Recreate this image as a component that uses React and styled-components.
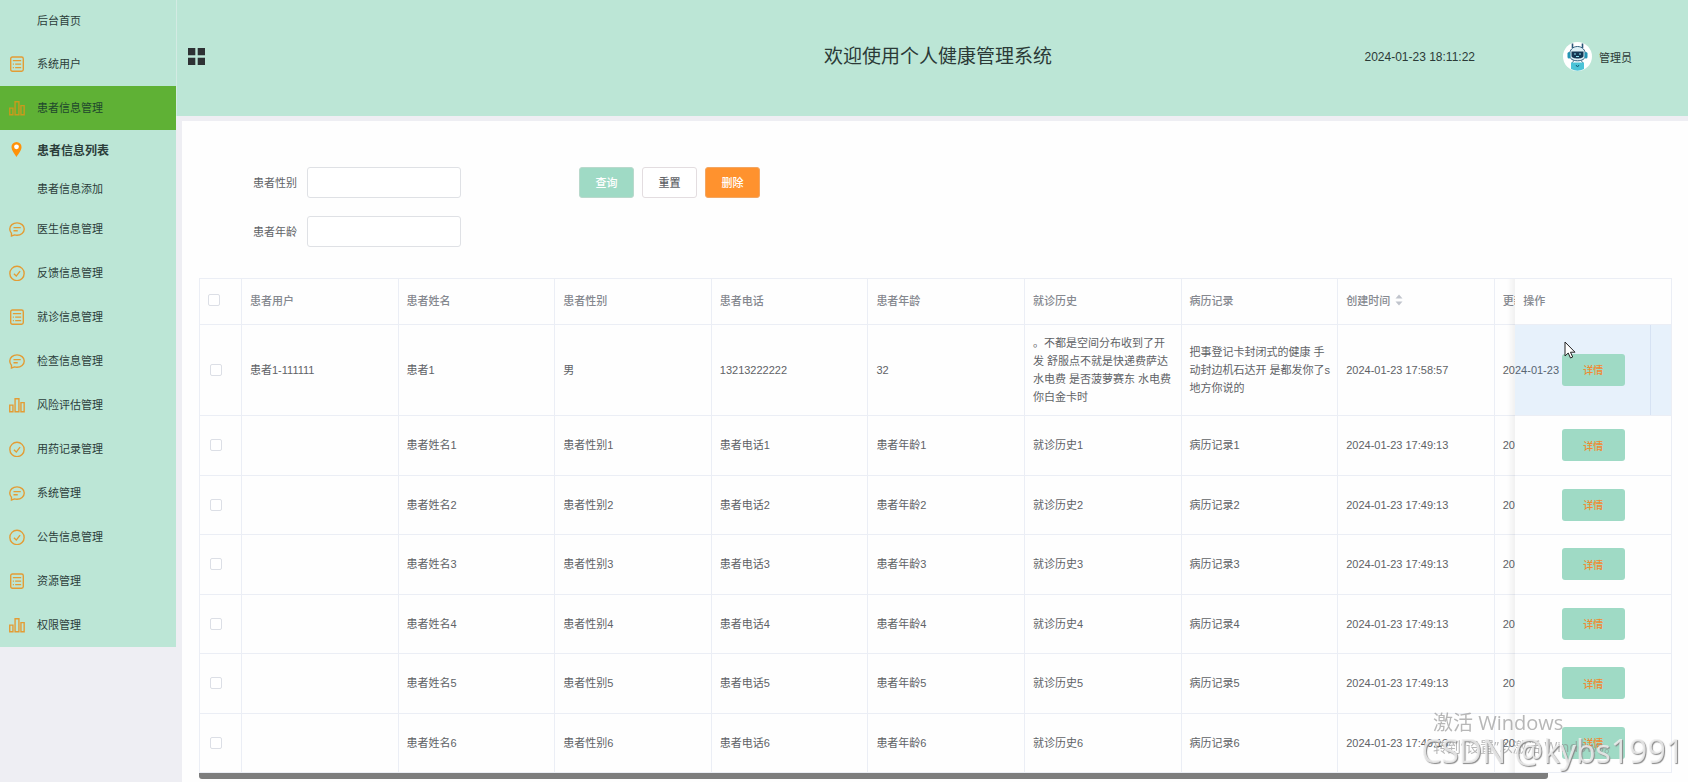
import React, { useState } from 'react';
import styled, { createGlobalStyle } from 'styled-components';

const GlobalStyle = createGlobalStyle`
  * {
    box-sizing: border-box;
  }

  body {
    margin: 0;
    background: #eeeef3;
    color: #606266;
    font-family: 'Liberation Sans', 'Noto Sans CJK SC', sans-serif;
    font-size: 11px;
  }

  button,
  input {
    font-family: inherit;
    font-size: inherit;
  }
`;

const Layout = styled.div`
  display: flex;
  min-height: 100vh;
`;

const Sidebar = styled.nav`
  flex: none;
  width: 176px;
`;

const Menu = styled.ul`
  margin: 0;
  padding: 0;
  list-style: none;
  background: #bce6d6;
`;

const MenuLink = styled.a`
  display: flex;
  align-items: center;
  gap: 12px;
  height: ${({ $height }) => $height || 44}px;
  padding: 0 9px 2px;
  color: ${({ $active }) => ($active ? '#20472d' : '#2b3d3a')};
  background: ${({ $active }) => ($active ? '#5fb135' : 'transparent')};
  font-size: ${({ $current }) => ($current ? 12 : 11)}px;
  font-weight: ${({ $current }) => ($current ? 'bold' : 'normal')};
  text-decoration: none;
`;

const IconSlot = styled.span`
  display: flex;
  width: 16px;
  height: 15px;
  color: ${({ $active }) => ($active ? '#c99a1c' : '#e39c34')};
`;

const Main = styled.div`
  flex: 1;
  min-width: 0;
  display: flex;
  flex-direction: column;
`;

const Header = styled.header`
  display: grid;
  grid-template-columns: 1fr auto 1fr;
  align-items: center;
  height: 116px;
  padding-left: 11px;
  padding-bottom: 3px;
  border-left: 1px solid #d3ebe3;
  background: #bce6d6;
  color: #2b3a37;
`;

const CollapseButton = styled.button`
  display: flex;
  width: 17px;
  padding: 0;
  border: none;
  background: none;
  color: #2e3234;
`;

const Title = styled.h1`
  margin: 0;
  font-size: 19px;
  font-weight: 400;
  line-height: 28px;
`;

const HeaderRight = styled.div`
  display: flex;
  align-items: center;
  justify-content: flex-end;
  gap: 88px;
  padding-right: 56px;
  font-size: 12px;
`;

const User = styled.div`
  display: flex;
  align-items: center;
  gap: 7px;
  font-size: 11px;
`;

const Panel = styled.main`
  flex: 1;
  min-width: 0;
  margin: 5px 0 0 6px;
  padding: 46px 16px 2px 17px;
  background: #fefefe;
`;

const SearchForm = styled.form`
  display: flex;
  align-items: flex-start;
  gap: 118px;
  margin: 0 0 31px 54px;
`;

const Fields = styled.div`
  display: flex;
  flex-direction: column;
  gap: 18px;
`;

const Field = styled.div`
  display: flex;
  align-items: center;
`;

const FieldLabel = styled.label`
  width: 54px;
  padding: 0 10px 2px 0;
  text-align: right;
  white-space: nowrap;
`;

const Input = styled.input`
  width: 154px;
  height: 31px;
  padding: 0 10px;
  border: 1px solid #dfe1e5;
  border-radius: 3px;
  background: #fff;
  outline: none;
`;

const ButtonGroup = styled.div`
  display: flex;
  gap: 8px;
`;

const Button = styled.button`
  width: 55px;
  height: 31px;
  padding: 0 0 2px;
  border: 1px solid ${({ $border }) => $border || '#e3dde0'};
  border-radius: 3px;
  background: ${({ $bg }) => $bg || '#fff'};
  color: ${({ $color }) => $color || '#606266'};
  font-weight: 500;
`;

const TableScroll = styled.div`
  overflow-x: auto;
  scrollbar-width: none;
  border: 1px solid #ebeef5;
  border-width: 1px 0 0 1px;
`;

const Table = styled.table`
  width: 100%;
  min-width: 1608px;
  table-layout: fixed;
  border-collapse: separate;
  border-spacing: 0;
`;

const HeadCell = styled.th`
  height: 46px;
  padding: 0 4px 3px 8px;
  border: 1px solid #ebeef5;
  border-width: 0 1px 1px 0;
  color: #85888f;
  font-weight: 500;
  text-align: left;
`;

const CheckHeadCell = styled(HeadCell)`
  width: 42px;
`;

const Cell = styled.td`
  padding: 0 4px 1px 8px;
  border: 1px solid #ebeef5;
  border-width: 0 1px 1px 0;
  line-height: 18px;
  white-space: pre-line;
`;

const CheckCell = styled(Cell)`
  padding-left: 10px;
`;

const Row = styled.tr`
  height: ${({ $tall }) => ($tall ? 91 : 60)}px;

  &:nth-child(odd) {
    height: ${({ $tall }) => ($tall ? 91 : 59)}px;
  }
`;

const edgeShadow = `
  &::before {
    content: '';
    position: absolute;
    top: 0;
    bottom: -1px;
    left: -8px;
    width: 8px;
    background: linear-gradient(to right, transparent, rgba(0, 0, 0, 0.05));
  }
`;

const FixedHeadCell = styled(HeadCell)`
  position: sticky;
  right: 0;
  background: #fefefe;
  ${edgeShadow}
`;

const FixedCell = styled(Cell)`
  position: sticky;
  right: 0;
  padding: 0 0 1px;
  text-align: center;
  background: ${({ $hover }) => ($hover ? 'rgba(33, 130, 225, 0.1)' : '#fefefe')};
  ${edgeShadow}
`;

const Checkbox = styled.input.attrs({ type: 'checkbox' })`
  appearance: none;
  display: block;
  width: 12px;
  height: 12px;
  margin: 0;
  border: 1px solid #dcdfe6;
  border-radius: 2px;
  background: ${({ checked }) => (checked ? '#9fdac5' : '#fff')};
`;

const SortLabel = styled.span`
  display: flex;
  align-items: center;
  gap: 5px;
`;

const DetailButton = styled.button`
  width: 63px;
  height: 32px;
  padding: 0;
  border: none;
  border-radius: 3px;
  background: #9fdac5;
  color: #ef8a32;
  font-size: 10px;
  font-weight: 500;
  vertical-align: middle;
`;

const Pointer = styled.svg`
  position: absolute;
  top: 16px;
  left: 49px;
`;

const Track = styled.div`
  height: 6px;
`;

const Thumb = styled.div`
  width: calc(100% - 124px);
  height: 6px;
  border-radius: 0 0 3px 3px;
  background: #7d7d7d;
`;

const Activation = styled.div`
  position: fixed;
  right: 75px;
  bottom: 24px;
  width: 180px;
  color: rgba(135, 135, 135, 0.6);
  font-family: 'Open Sans', 'Noto Sans CJK SC', sans-serif;
  font-size: 14px;
  line-height: 22px;
  white-space: nowrap;
  pointer-events: none;
`;

const ActivationTitle = styled.div`
  font-size: 20px;
  line-height: 26px;
`;

const Watermark = styled.div`
  position: fixed;
  right: 4px;
  bottom: 11px;
  color: rgba(238, 238, 238, 0.85);
  font-family: 'Open Sans', sans-serif;
  font-size: 32px;
  line-height: 40px;
  text-shadow: 1px 1px 1px #888;
  white-space: nowrap;
  pointer-events: none;
`;

const ICONS = {
  list: (
    <>
      <rect x="1.6" y="0.9" width="11.8" height="13.4" rx="1.6" />
      <path d="M3.6 4.3h7.8M3.6 7.6h1M5.8 7.6h5.6M3.6 10.9h1M5.8 10.9h5.6" />
    </>
  ),
  bars: (
    <path d="M0.7 7.6h3v6.2h-3zM5.7 1.7h3.6v12.1H5.7zM11.2 5.3h3v8.5h-3z" />
  ),
  chat: (
    <>
      <path d="M2.3 11.4C1.3 10.4 0.7 9.1 0.7 7.6C0.7 4.2 3.8 1.8 7.5 1.8s6.8 2.4 6.8 5.7-3.1 5.8-6.8 5.8c-.8 0-1.600-.1-2.300-.3l-2.900 1z" />
      <path d="M4.2 6.2h6.8M4.2 9.1h4" />
    </>
  ),
  check: (
    <>
      <circle cx="7.5" cy="7.9" r="6.7" />
      <path d="M4.6 8.3l2.200 2.100 3.600-4.600" />
    </>
  ),
};

const MenuIcon = ({ name }) => {
  if (!name) return null;
  if (name === 'pin') {
    return (
      <svg width="15" height="15" viewBox="0 0 15 15" aria-hidden="true">
        <path d="M7.5 0a5 5 0 0 0-5 5.2c0 3.3 3.3 6.6 5 9.8 1.700-3.200 5-6.500 5-9.800a5 5 0 0 0-5-5.200z" fill="#ff9208" />
        <circle cx="7.5" cy="4.8" r="2.4" fill="#fff" />
      </svg>
    );
  }
  return (
    <svg width="16" height="16" viewBox="0 0 15 15" fill="none" stroke="currentColor" strokeWidth="1.3" aria-hidden="true">
      {ICONS[name]}
    </svg>
  );
};

const Avatar = () => (
  <svg width="29" height="29" viewBox="0 0 29 29" aria-hidden="true">
    <circle cx="14.5" cy="14.5" r="14.5" fill="#fff" />
    <path d="M9.5 6V1.5M19.5 6V1.5" stroke="#285575" strokeWidth="1.6" />
    <path d="M6.5 13c0-5 3.2-8.5 8-8.5s8 3.5 8 8.500c0 4-3.500 5.800-8 5.800S6.500 17 6.500 13z" fill="#dceff5" stroke="#315f7d" />
    <rect x="4.5" y="10" width="3" height="6.5" rx="1.5" fill="#2393b4" />
    <rect x="21.5" y="10" width="3" height="6.5" rx="1.5" fill="#2393b4" />
    <path d="M8.5 9.5h12v4.500c0 1.600-2.600 2.500-6 2.500s-6-.9-6-2.500z" fill="#153753" />
    <path d="M11 12h2M16 12h2M13 14.5h3" stroke="#8fe4f2" strokeWidth="1.2" />
    <path d="M11 18.5l-2.500 3M18 18.500l2.500 3" stroke="#527b92" />
    <path d="M8 20.5h13V27a14.500 14.500 0 0 1-13 0z" fill="#4cc3d7" />
    <path d="M13 23l1.500 2 1.500-2" fill="none" stroke="#185e7a" />
  </svg>
);

const menuItems = [
  { label: '后台首页', height: 42 },
  { label: '系统用户', icon: 'list' },
  { label: '患者信息管理', icon: 'bars', active: true },
  { label: '患者信息列表', icon: 'pin', current: true, height: 40 },
  { label: '患者信息添加', height: 37 },
  { label: '医生信息管理', icon: 'chat' },
  { label: '反馈信息管理', icon: 'check' },
  { label: '就诊信息管理', icon: 'list' },
  { label: '检查信息管理', icon: 'chat' },
  { label: '风险评估管理', icon: 'bars' },
  { label: '用药记录管理', icon: 'check' },
  { label: '系统管理', icon: 'chat' },
  { label: '公告信息管理', icon: 'check' },
  { label: '资源管理', icon: 'list' },
  { label: '权限管理', icon: 'bars' },
];

const columns = ['患者用户', '患者姓名', '患者性别', '患者电话', '患者年龄', '就诊历史', '病历记录'];

const rows = [
  {
    id: 0,
    cells: [
      '患者1-111111',
      '患者1',
      '男',
      '13213222222',
      '32',
      '。不都是空间分布收到了开\n发 舒服点不就是快递费萨达\n水电费 是否菠萝赛东 水电费\n你白金卡时',
      '把事登记卡封闭式的健康 手\n动封边机石达开 是都发你了s\n地方你说的',
    ],
    time: '2024-01-23 17:58:57',
    hover: true,
  },
  ...[1, 2, 3, 4, 5, 6].map((n) => ({
    id: n,
    cells: ['', `患者姓名${n}`, `患者性别${n}`, `患者电话${n}`, `患者年龄${n}`, `就诊历史${n}`, `病历记录${n}`],
    time: '2024-01-23 17:49:13',
  })),
];

const PatientTable = () => {
  const [selected, setSelected] = useState([]);

  const toggle = (id) => {
    setSelected(selected.includes(id) ? selected.filter((v) => v !== id) : [...selected, id]);
  };

  const toggleAll = () => {
    setSelected(selected.length === rows.length ? [] : rows.map((row) => row.id));
  };

  return (
    <>
      <TableScroll>
        <Table>
          <thead>
            <tr>
              <CheckHeadCell>
                <Checkbox aria-label="全选" checked={selected.length === rows.length} onChange={toggleAll} />
              </CheckHeadCell>
              {columns.map((name) => (
                <HeadCell key={name}>{name}</HeadCell>
              ))}
              <HeadCell>
                <SortLabel>
                  创建时间
                  <svg width="8" height="12" viewBox="0 0 8 12" fill="#c0c4cc" aria-hidden="true">
                    <path d="M4 0.5L7.5 4.5h-7zM4 11.5L0.5 7.5h7z" />
                  </svg>
                </SortLabel>
              </HeadCell>
              <HeadCell>更新时间</HeadCell>
              <FixedHeadCell>操作</FixedHeadCell>
            </tr>
          </thead>
          <tbody>
            {rows.map((row) => (
              <Row key={row.id} $tall={row.hover}>
                <CheckCell>
                  <Checkbox
                    aria-label={`选择第${row.id + 1}行`}
                    checked={selected.includes(row.id)}
                    onChange={() => toggle(row.id)}
                  />
                </CheckCell>
                {row.cells.map((text, i) => (
                  <Cell key={columns[i]}>{text}</Cell>
                ))}
                <Cell>{row.time}</Cell>
                <Cell>{row.time}</Cell>
                <FixedCell $hover={row.hover}>
                  <DetailButton type="button">详情</DetailButton>
                  {row.hover && (
                    <Pointer width="12" height="18" viewBox="0 0 12 18" aria-hidden="true">
                      <path d="M1 1v14l3.200-3 2.300 5 2.200-1-2.200-4.800H11z" fill="#fff" stroke="#222" />
                    </Pointer>
                  )}
                </FixedCell>
              </Row>
            ))}
          </tbody>
        </Table>
      </TableScroll>
      <Track>
        <Thumb />
      </Track>
    </>
  );
};

const App = () => {
  const [gender, setGender] = useState('');
  const [age, setAge] = useState('');

  const handleReset = () => {
    setGender('');
    setAge('');
  };

  return (
    <>
      <GlobalStyle />
      <Layout>
        <Sidebar>
          <Menu>
            {menuItems.map(({ label, icon, active, current, height }) => (
              <li key={label}>
                <MenuLink href="#" $active={active} $current={current} $height={height}>
                  <IconSlot $active={active}>
                    <MenuIcon name={icon} />
                  </IconSlot>
                  {label}
                </MenuLink>
              </li>
            ))}
          </Menu>
        </Sidebar>
        <Main>
          <Header>
            <CollapseButton type="button" aria-label="折叠菜单">
              <svg width="17" height="17" viewBox="0 0 17 17" fill="currentColor" aria-hidden="true">
                <path d="M0 0h7.300v7.300H0zM9.700 0H17v7.300H9.700zM0 9.700h7.300V17H0zM9.700 9.700H17V17H9.700z" />
              </svg>
            </CollapseButton>
            <Title>欢迎使用个人健康管理系统</Title>
            <HeaderRight>
              <time>2024-01-23 18:11:22</time>
              <User>
                <Avatar />
                管理员
              </User>
            </HeaderRight>
          </Header>
          <Panel>
            <SearchForm onSubmit={(e) => e.preventDefault()}>
              <Fields>
                <Field>
                  <FieldLabel htmlFor="gender">患者性别</FieldLabel>
                  <Input id="gender" value={gender} onChange={(e) => setGender(e.target.value)} />
                </Field>
                <Field>
                  <FieldLabel htmlFor="age">患者年龄</FieldLabel>
                  <Input id="age" value={age} onChange={(e) => setAge(e.target.value)} />
                </Field>
              </Fields>
              <ButtonGroup>
                <Button type="submit" $bg="#9fdac5" $border="#b9d9cc" $color="#fff">
                  查询
                </Button>
                <Button type="button" onClick={handleReset}>
                  重置
                </Button>
                <Button type="button" $bg="#ff922e" $border="#f3a662" $color="#fff">
                  删除
                </Button>
              </ButtonGroup>
            </SearchForm>
            <PatientTable />
          </Panel>
        </Main>
      </Layout>
      <Activation>
        <ActivationTitle>激活 Windows</ActivationTitle>
        转到“设置”以激活 Windows。
      </Activation>
      <Watermark>CSDN @kybs1991</Watermark>
    </>
  );
};

export default App;
